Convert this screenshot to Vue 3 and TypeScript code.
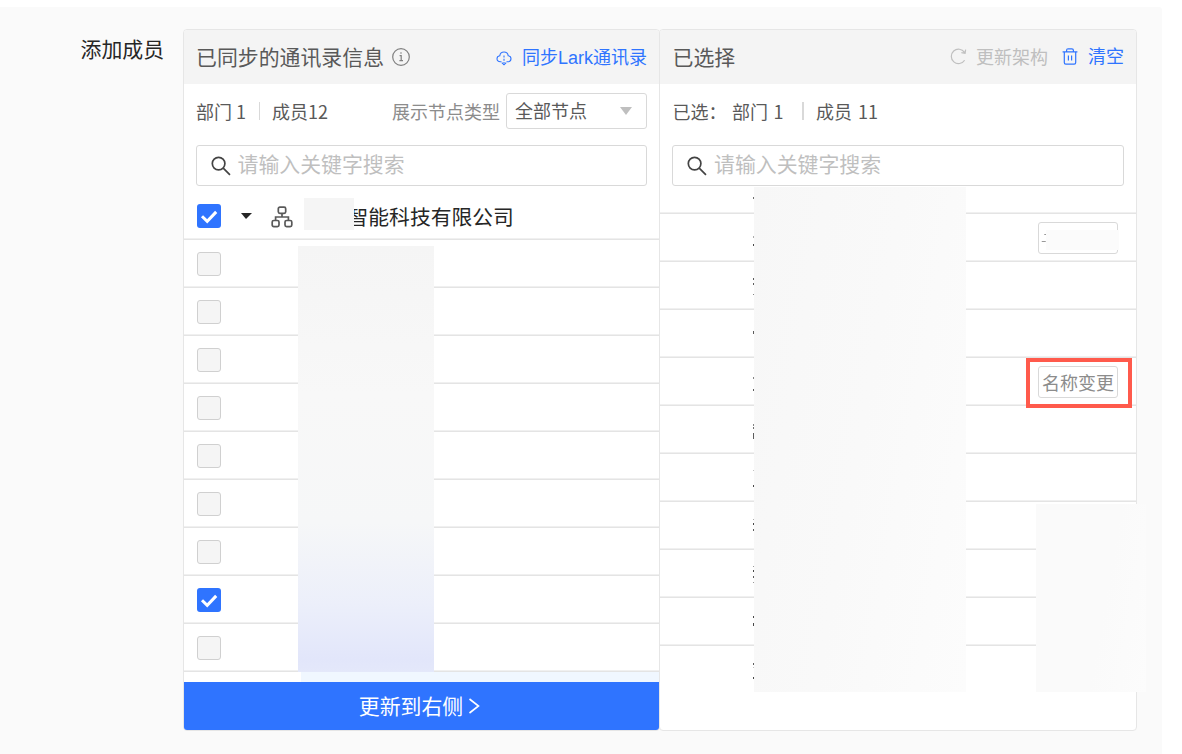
<script setup lang="ts">
interface Row { id: number; checked: boolean }
interface Speck { x: number; y: number; w: number; h: number; o: number }

const rows: Row[] = Array.from({ length: 9 }, (_, i) => ({ id: i + 1, checked: i === 7 }))
const picked = Array.from({ length: 9 }, (_, i) => ({ id: i, tag: i === 0 ? 'masked' : i === 3 ? 'renamed' : '' }))

// [y, height, opacity] of the name strokes left visible beside the cover
const edges: number[][] = [
  [197, 2, 0.7], [236, 2, 0.4], [244, 2, 0.9], [278, 2, 0.8], [283, 2, 0.8], [294, 1, 0.6],
  [331, 3, 0.8], [377, 2, 0.6], [389, 2, 0.8], [424, 2, 0.6], [427, 2, 0.7], [433, 6, 0.8],
  [470, 1, 0.3], [485, 2, 0.9], [519, 1, 0.4], [523, 2, 0.9], [529, 2, 0.8], [566, 1, 0.5],
  [570, 2, 0.9], [576, 2, 0.8], [582, 1, 0.5], [616, 2, 0.9], [623, 3, 0.9], [663, 2, 0.8],
  [667, 1, 0.3], [677, 2, 0.9],
]
const specks: Speck[] = edges.map(([y, h, o]) => ({ x: 0, y: y - 187, w: 2, h, o }))
</script>

<template>
  <div class="page">
    <div class="form-item">
      <label class="label">添加成员</label>
      <div class="transfer">
        <section class="panel left">
          <header class="head">
            <span class="title">已同步的通讯录信息</span>
            <svg class="info" viewBox="0 0 18 18"><circle cx="9" cy="9" r="8.3" /><path d="M7.600 7.600h1.600v5M7.400 12.700h3.600" /><circle class="dot" cx="9" cy="5" r=".8" /></svg>
            <a class="link sync">
              <svg class="cloud" viewBox="0 0 16 16"><path d="M5.500 11.800H4.300C2.200 11.800 1 10.500 1 8.800 1 7 2.200 5.900 3.800 5.700 4.200 3.200 5.700 2 8 2s3.800 1.200 4.200 3.700C13.800 5.900 15 7 15 8.800c0 1.700-1.200 3-3.300 3h-1.200" /><path class="dash" d="M8 5.500v8" /><path d="M5.800 12.700L8 14.800l2.200-2.100" /></svg>
              <span>同步Lark通讯录</span>
            </a>
          </header>
          <div class="stats">
            <span>部门 1</span><i class="sep"></i><span>成员12</span>
            <span class="type-label">展示节点类型</span>
            <div class="select"><span class="up">全部节点</span><i class="arrow"></i></div>
          </div>
          <div class="search">
            <svg viewBox="0 0 20 20"><circle cx="7.600" cy="7.600" r="6.300" /><path d="M12.200 12.200L19 18.800" /></svg>
            <span>请输入关键字搜索</span>
          </div>
          <div class="list">
            <div class="row root">
              <span class="check on"><svg viewBox="0 0 24 24"><path d="M5 12.300l5.200 5.100 9-9.500" /></svg></span>
              <i class="caret"></i>
              <svg class="org" viewBox="0 0 22 22"><rect x="7.300" y="1.200" width="7.400" height="6.200" rx="1.600" /><rect x="1.200" y="14.500" width="6.800" height="6.200" rx="1.600" /><rect x="14" y="14.500" width="6.800" height="6.200" rx="1.600" /><path d="M11 7.400v3.600M4.600 14.500V11h12.800v3.500" /></svg>
              <span class="cover-name"></span>
              <span class="company">智能科技有限公司</span>
            </div>
            <div v-for="r in rows" :key="r.id" class="row">
              <span class="check" :class="{ on: r.checked }"><svg v-if="r.checked" viewBox="0 0 24 24"><path d="M5 12.300l5.200 5.100 9-9.500" /></svg></span>
            </div>
            <div class="hover-row"></div>
            <div class="cover left-cover"></div>
          </div>
          <button class="submit"><span>更新到右侧</span><svg viewBox="0 0 12 16"><path d="M1.500 1l9 7-9 7" /></svg></button>
        </section>

        <section class="panel right">
          <header class="head">
            <span class="title">已选择</span>
            <span class="refresh">
              <svg viewBox="0 0 17 17"><path d="M14.600 12.200A7.200 7.200 0 1 1 14.500 4.400M15.600 1.600l-.5 3.700-3.700-.7" /></svg>
              <span>更新架构</span>
            </span>
            <a class="link clear">
              <svg viewBox="0 0 16 17"><path d="M.6 3.800h14.800M4.600 3.600V2.300c0-1 .6-1.500 1.500-1.500h3.800c.9 0 1.500.5 1.500 1.500v1.300M2.300 4v10.600c0 1 .6 1.600 1.500 1.600h8.400c.9 0 1.500-.6 1.500-1.600V4M6.400 7.500v5M9.600 7.500v5" /></svg>
              <span>清空</span>
            </a>
          </header>
          <div class="stats">
            <span>已选：</span><span class="dept">部门 1</span><i class="sep wide"></i><span class="spaced">成员 11</span>
          </div>
          <div class="search">
            <svg viewBox="0 0 20 20"><circle cx="7.600" cy="7.600" r="6.300" /><path d="M12.200 12.200L19 18.800" /></svg>
            <span>请输入关键字搜索</span>
          </div>
          <div class="list">
            <div class="row stub"></div>
            <div v-for="p in picked" :key="p.id" class="row">
              <span v-if="p.tag === 'renamed'" class="tag">名称变更<i class="highlight"></i></span>
              <span v-else-if="p.tag" class="tag">
                <i class="tag-stroke"></i><i class="tag-cover"></i>
              </span>
            </div>
            <svg class="edge" viewBox="0 0 2 505">
              <rect v-for="s in specks" :key="s.y" :x="s.x" :y="s.y" :width="s.w" :height="s.h" :opacity="s.o" />
            </svg>
            <div class="cover name-cover"></div>
            <div class="cover status-cover"></div>
          </div>
        </section>
      </div>
    </div>
  </div>
</template>

<style>
body { margin: 0; background: #fff; }
</style>

<style scoped>
* { box-sizing: border-box; }
.page {
  width: 1182px; height: 754px; padding-top: 7px; overflow: hidden;
  font: 18px/24px "Noto Sans CJK SC", sans-serif; color: #595959; white-space: nowrap;
}
.form-item {
  display: flex; width: 1162px; height: 747px; padding: 22px 0 0 80px;
  background: #fafafa; border-radius: 0 3px 0 0;
}
.label { width: 103px; padding: 4px 0 0 .5px; font-size: 20.900px; line-height: 30px; color: #262626; }
.transfer { display: flex; height: 702px; }
.panel { display: flex; flex-direction: column; background: #fff; border: 1px solid #e6e6e6; border-radius: 4px; overflow: visible; }
.left { width: 477px; }
.right { width: 478px; margin-left: -1px; }
.head { display: flex; align-items: center; height: 54px; padding: 1px 12px 0; background: #f4f4f4; border-radius: 3px 3px 0 0; flex: none; }
.right .head { padding-left: 12.500px; }
.title { font-size: 20.900px; line-height: 30px; padding-bottom: 4px; }
svg { fill: none; stroke: currentColor; flex: none; }
.info { width: 18px; height: 18px; margin: -1px 0 0 8px; color: #808080; stroke-width: 1.200; }
.info .dot { fill: currentColor; stroke: none; }
.link { display: flex; align-items: center; color: #2f74ff; font-family: "Liberation Sans", "Noto Sans CJK SC", sans-serif; }
.sync { margin-left: auto; }
.cloud { width: 16px; height: 16px; margin-right: 10px; stroke-width: 1.100; }
.dash { stroke-dasharray: 2 1.200; }
.stats { display: flex; align-items: center; height: 54px; padding: 0 12px; flex: none; }
.right .stats { padding-left: 12.500px; }
.up { padding-bottom: 2px; }
.spaced { word-spacing: 2px; }
.sep { width: 1px; height: 18px; margin: 0 12px 0 13px; background: #d9d9d9; }
.sep.wide { width: 2px; margin: 0 12px 0 18.500px; }
.dept { margin-left: 5.500px; word-spacing: 1.500px; }
.type-label { margin-left: auto; padding-bottom: 1px; color: #8c8c8c; }
.select { display: flex; align-items: center; justify-content: space-between; width: 141px; height: 36px; margin-left: 6px; padding: 0 14px 0 8px; border: 1px solid #d9d9d9; border-radius: 3px; background: #fff; }
.arrow { border: 6.500px solid transparent; border-top: 8px solid #bfbfbf; border-bottom: 0; }
.search { display: flex; align-items: center; height: 41px; margin: 7px 12px 0; padding-left: 13.500px; border: 1px solid #d9d9d9; border-radius: 3px; flex: none; font-size: 20.900px; color: #bfbfbf; line-height: 30px; }
.right .search { padding-left: 14px; }
.search span { padding-bottom: 5px; }
.search svg { width: 20px; height: 20px; margin-right: 7px; color: #434343; stroke-width: 1.700; }
.list { position: relative; flex: 1; min-height: 0; padding-top: 6px; }
.row { display: flex; align-items: center; height: 48px; padding: 0 13px; box-shadow: inset 0 -1px #e4e4e4, inset 0 -2px #f0f0f0; }
.check { width: 24px; height: 24px; border: 1px solid #d0d0d0; border-radius: 3px; background: #f5f5f5; flex: none; }
.check.on { border: 0; background: #2f74ff; color: #fff; }
.check svg { display: block; width: 24px; height: 24px; stroke-width: 3; }
.caret { margin: 0 0 0 20px; border: 5.500px solid transparent; border-top: 6px solid #262626; border-bottom: 0; border-left-width: 5px; border-right-width: 6px; }
.org { width: 22px; height: 22px; margin: 1px 0 0 19px; color: #595959; stroke-width: 1.700; }
.cover-name { position: relative; z-index: 1; width: 50px; height: 32px; margin: -4px 0 0 11px; background: #f5f5f5; }
.company { margin-left: -6.500px; padding-bottom: 1px; font-size: 20.800px; line-height: 30px; color: #262626; }
.hover-row { height: 10px; margin-left: 117px; background: #f0f7ff; }
.cover { position: absolute; }
.left-cover { left: 114px; top: 60px; width: 136px; height: 426px; background: linear-gradient(to bottom, #f5f5f5, #f8f8f8 35%, #f6f7f8 65%, #eceffa 84%, #e2e6fa 97%, #e4e8fa); }
.submit { display: flex; align-items: center; justify-content: center; height: 48px; padding: 0 4px 0 0; border: 0; border-radius: 0 0 3px 3px; background: #2f74ff; color: #fff; font: 20.900px/30px "Noto Sans CJK SC", sans-serif; flex: none; }
.submit span { padding-bottom: 2px; }
.submit svg { width: 12px; height: 16px; margin-left: 5px; stroke-width: 1.600; }
.refresh { display: flex; align-items: center; margin-left: auto; color: #bfbfbf; }
.refresh span { padding-bottom: 4px; }
.refresh svg { width: 17px; height: 17px; margin: -3px 9px 0 0; stroke-width: 1.200; }
.clear { margin-left: 14px; padding-bottom: 2px; }
.clear svg { width: 16px; height: 17px; margin-right: 10px; stroke-width: 1.200; }
.right .list { padding-top: 0; }
.row.stub { height: 28px; }
.right .row { justify-content: flex-end; padding-right: 18px; }
.tag { position: relative; width: 80px; height: 32px; border: 1px solid #d9d9d9; border-radius: 3px; color: #8c8c8c; line-height: 30px; text-align: center; }
.highlight { position: absolute; inset: -9px -15px -11px -13px; border: 4px solid #ff5a4c; z-index: 1; }
.tag-stroke { position: absolute; left: 4px; top: 11px; width: 4px; height: 8px; border: solid #999; border-width: 1px 0; transform: skewX(-20deg); }
.tag-cover { position: absolute; left: 7px; top: 7px; width: 73px; height: 20px; background: #fbfbfb; }
.edge { position: absolute; left: 93px; top: 1px; width: 2px; height: 505px; fill: #333; stroke: none; }
.name-cover { left: 94px; top: 1px; width: 212px; height: 505px; background: linear-gradient(100deg, #f7f7f7, #f9f9f9 50%, #fcfcfc); }
.status-cover { left: 376px; top: 318px; width: 110px; height: 188px; background: linear-gradient(100deg, #fafafa 60%, #fcfcfc); }
</style>
